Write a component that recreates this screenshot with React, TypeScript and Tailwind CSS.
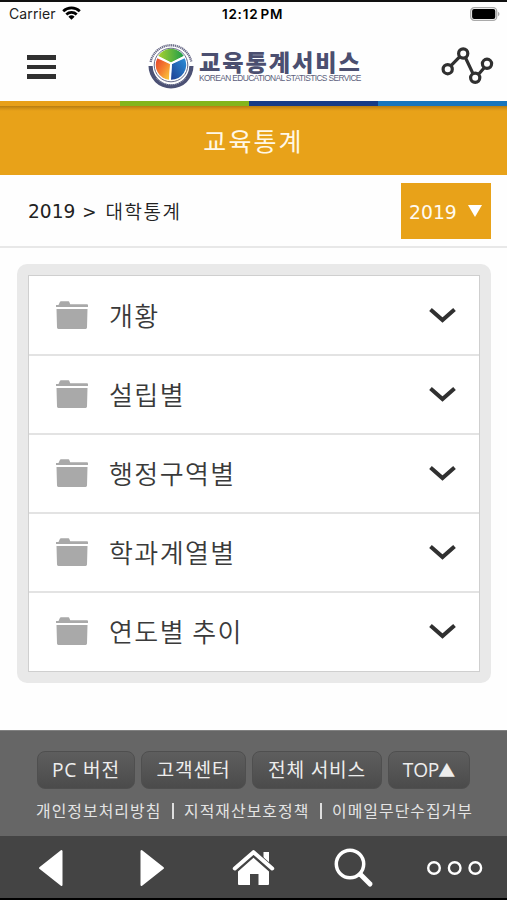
import React from 'react';
import { clsx } from 'clsx';

const StatusBar: React.FC = () => (
  <div className="h-[27px] border-t-2 border-[#111] flex items-center justify-between relative px-[9px] font-['Inter','Liberation_Sans',sans-serif] text-black">
    <div className="flex items-center gap-[6px]">
      <span className="text-[14px] leading-6 tracking-[0.1px] text-[#222] -mt-[2px]">Carrier</span>
      <svg className="w-[19px] h-[14px] -mt-[3px]" viewBox="0 0 19 14" fill="none" stroke="#000" strokeWidth="2.7">
        <path d="M1.2 5.2a12 12 0 0 1 16.6 0" />
        <path d="M4.3 8.5a7.5 7.5 0 0 1 10.4 0" />
        <path d="M9.5 13.8 6.4 10.7a4.5 4.5 0 0 1 6.2 0z" fill="#000" stroke="none" />
      </svg>
    </div>
    <span className="absolute left-[222px] top-0 text-[13.5px] leading-6 tracking-[0.75px] font-semibold whitespace-nowrap [word-spacing:-2px]">
      12:12 PM
    </span>
    <svg className="w-[30px] h-[14px] -mr-[2px] -mt-[2px]" viewBox="0 0 30 14">
      <rect x="0.7" y="0.7" width="26" height="12.6" rx="3.6" fill="#fff" stroke="#aaa" strokeWidth="1.3" />
      <rect x="2.1" y="2" width="23.2" height="10" rx="2" fill="#000" />
      <path d="M28 4.8c2 .8 2 3.6 0 4.4z" fill="#aaa" />
    </svg>
  </div>
);

const Emblem: React.FC = () => (
  <svg className="w-[46px] h-[46px]" viewBox="0 0 46 46" fill="none">
    <defs>
      <linearGradient id="green" x1="0" y1="0" x2="1" y2="0">
        <stop offset="0" stopColor="#a9d12f" />
        <stop offset="1" stopColor="#1d9c4a" />
      </linearGradient>
      <linearGradient id="red" x1="0" y1="0" x2="1" y2="1">
        <stop offset="0" stopColor="#e5412b" />
        <stop offset="0.5" stopColor="#f58030" />
        <stop offset="1" stopColor="#fbd23c" />
      </linearGradient>
      <linearGradient id="blue" x1="0" y1="1" x2="1" y2="0">
        <stop offset="0" stopColor="#1d3f94" />
        <stop offset="1" stopColor="#2c8fd8" />
      </linearGradient>
    </defs>
    <path d="M2.6 19a20.8 20.8 0 0 1 40.8 0" stroke="#6c6e8a" strokeWidth="2.3" strokeDasharray="1.3 0.6" />
    <path d="M0.5 23h4.2a18.3 18.3 0 0 0 36.6 0h4.2a22.5 22.5 0 0 1-45 0z" fill="#4c5174" />
    <path d="M8 35a20 20 0 0 0 30 0" stroke="#b9bccd" strokeWidth="0.8" strokeDasharray="1 1" />
    <circle cx="23" cy="22" r="16.8" stroke="#686c89" strokeWidth="1" />
    <path d="M23 19.5 10.2 13a15 15 0 0 1 25.6 0z" fill="url(#green)" />
    <path d="M22 21 21 36.8A15 15 0 0 1 9.3 15.2z" fill="url(#red)" />
    <path d="M24 21 36.7 15.2A15 15 0 0 1 23 36.8z" fill="url(#blue)" />
    <path d="M23 20.5 9.3 13.5M23 20.5l13.7-7M23 20.5 21.8 37" stroke="#fff" strokeWidth="1.5" />
  </svg>
);

const Header: React.FC = () => (
  <header className="h-[74px] flex items-center pl-[27px] pr-[13px]">
    <button className="flex flex-col gap-[5px] mt-[6px]" aria-label="메뉴">
      <span className="w-[29px] h-[4.5px] bg-[#303030]" />
      <span className="w-[29px] h-[4.5px] bg-[#303030]" />
      <span className="w-[29px] h-[4.5px] bg-[#303030]" />
    </button>
    <div className="flex items-center ml-[92px] mt-[4px]">
      <Emblem />
      <div className="ml-[5px] w-[164px] whitespace-nowrap text-[#4b4f70]">
        <div className="font-['Noto_Sans_CJK_KR',sans-serif] font-black text-[23.2px] leading-[24px] tracking-[1.9px]">교육통계서비스</div>
        <div className="font-['Liberation_Sans',sans-serif] text-[8.4px] leading-[10px] tracking-[-0.62px] text-[#5c5f7c]">
          KOREAN EDUCATIONAL STATISTICS SERVICE
        </div>
      </div>
    </div>
    <svg className="w-[54px] h-[38px] ml-auto mt-[3px]" viewBox="0 0 54 38" fill="none" stroke="#303030" strokeWidth="3.2">
      <path d="m11 18.7 8.6-8.8M25.6 11l7.4 15.600M38.8 27l5-5.8" />
      <circle cx="7.7" cy="22.2" r="4.6" />
      <circle cx="23.2" cy="6.5" r="4.6" />
      <circle cx="35.2" cy="30.8" r="4.6" />
      <circle cx="47" cy="16.8" r="4.6" />
    </svg>
  </header>
);

const FolderIcon: React.FC = () => (
  <svg className="w-8 h-7" viewBox="0 0 32 28" fill="#a9a9a9">
    <path d="M0 6V4h2.5L4 0.8Q4.2.3 5 .3h7.5q.7 0 .8.6l.9 2.4H31q1 0 1 1V6z" />
    <path d="M.5 8h31L31 26.6q0 1.4-1.4 1.4H2.4Q1 28 1 26.6z" />
  </svg>
);

const categories = ['개황', '설립별', '행정구역별', '학과계열별', '연도별 추이'];

const CategoryRow: React.FC<{ label: string; last: boolean }> = ({ label, last }) => (
  <li className={clsx('h-[79px] flex items-center pl-[27px] pr-[23px]', last ? 'pb-[3px]' : 'pb-px border-b-2 border-[#e3e3e3]')}>
    <FolderIcon />
    <span className="ml-[21px] font-['Noto_Sans_CJK_KR',sans-serif] font-[350] text-[26px] leading-8 tracking-[1.4px] text-[#3a3a3a] whitespace-nowrap">{label}</span>
    <svg className="w-[27px] h-[17px] ml-auto mt-px" viewBox="0 0 27 17" fill="none" stroke="#303030" strokeWidth="4">
      <path d="m1.5 2.5 12 10.6 12-10.6" />
    </svg>
  </li>
);

const footerButtons = [
  { label: 'PC 버전', width: 'w-[98px]' },
  { label: '고객센터', width: 'w-[105px]' },
  { label: '전체 서비스', width: 'w-[130px]' },
];

const buttonClass =
  'h-[38px] rounded-[8px] border border-[#4f4f4f] bg-linear-to-b from-[#5e5e5e] to-[#4b4b4b] text-[19.2px] leading-[36px] tracking-[0.8px]';

const Footer: React.FC = () => (
  <footer className="h-[106px] bg-[#666] border-t border-[#818181] font-['Open_Sans','Noto_Sans_CJK_KR',sans-serif] text-[#ededed] whitespace-nowrap">
    <div className="flex gap-[6px] pl-[37px] pt-[20px]">
      {footerButtons.map((button) => (
        <button key={button.label} className={clsx(buttonClass, button.width)}>
          {button.label}
        </button>
      ))}
      <button className={clsx(buttonClass, 'w-[82px] flex items-center justify-center')}>
        <span className="tracking-[-0.2px]">TOP</span>
        <span className="font-['Noto_Sans_CJK_KR',sans-serif] text-[17px] tracking-[0px] -ml-px">▲</span>
      </button>
    </div>
    <div className="flex justify-between items-center ml-[36px] w-[437px] mt-[10px] font-['Noto_Sans_CJK_KR',sans-serif] text-[15.9px] leading-[24px] tracking-[1.05px] text-[#e4e4e4]">
      <a>개인정보처리방침</a>
      <span className="w-[2px] h-[16px] bg-[#dedede]" />
      <a>지적재산보호정책</a>
      <span className="w-[2px] h-[16px] bg-[#dedede]" />
      <a>이메일무단수집거부</a>
    </div>
  </footer>
);

const Toolbar: React.FC = () => (
  <nav className="h-[64px] bg-[#444] border-b-2 border-black flex items-center pl-[38px] pt-[2px]">
    <svg className="w-[26px] h-[38px]" viewBox="0 0 26 38" fill="#fff" stroke="#fff" strokeWidth="2" strokeLinejoin="round">
      <path d="M2 19 23.5 2v34z" />
    </svg>
    <svg className="w-[26px] h-[38px] ml-[75px]" viewBox="0 0 26 38" fill="#fff" stroke="#fff" strokeWidth="2" strokeLinejoin="round">
      <path d="M24 19 2.5 2v34z" />
    </svg>
    <svg className="w-[43px] h-[38px] ml-[67px]" viewBox="0 0 43 38" fill="none">
      <path d="M31.5 3h5.5v13l-5.5-5z" fill="#fff" />
      <path d="M6 22.5 21.5 8.8 37 22.5V35q0 1-1 1h-9.5V25H18v11H7q-1 0-1-1z" fill="#fff" />
      <path d="M2.8 20 21.5 3.5 40.2 20" stroke="#444" strokeWidth="6" strokeLinecap="round" strokeLinejoin="round" />
      <path d="M2.8 19.500 21.500 3.200 40.200 19.500" stroke="#fff" strokeWidth="4" strokeLinecap="round" strokeLinejoin="round" />
    </svg>
    <svg className="w-[40px] h-[40px] ml-[59px]" viewBox="0 0 40 40" fill="none" stroke="#fff">
      <circle cx="16" cy="16" r="13.7" strokeWidth="3.5" />
      <path d="m26.5 26.5 9.500 9.500" strokeWidth="5" strokeLinecap="round" />
    </svg>
    <svg className="w-[58px] h-[16px] ml-[52px]" viewBox="0 0 58 16" fill="none" stroke="#fff" strokeWidth="2.4">
      <circle cx="8" cy="8" r="5.8" />
      <circle cx="28.7" cy="8" r="5.8" />
      <circle cx="49.3" cy="8" r="5.8" />
    </svg>
  </nav>
);

const App: React.FC = () => {
  return (
    <div className="w-[507px] h-[900px] bg-[#fefefe] overflow-hidden flex flex-col">
      <StatusBar />
      <Header />
      <div className="h-[5px] flex">
        <span className="w-[120px] bg-[#e8a019]" />
        <span className="w-[129px] bg-[#83b51c]" />
        <span className="w-[129px] bg-[#153b88]" />
        <span className="flex-1 bg-[#1775bd]" />
      </div>
      <div className="h-[69px] bg-[linear-gradient(#b87d12_0px,#d99616_3px,#e8a219_5px)] flex items-center justify-center">
        <h1 className="font-['Noto_Sans_CJK_KR',sans-serif] text-[25px] leading-8 tracking-[2.1px] text-[#fff8e7] pb-px">교육통계</h1>
      </div>

      <div className="h-[73px] border-b-2 border-[#e8e8e8] flex items-center justify-between pl-[28px] pr-[16px]">
        <div className="flex items-center font-['DejaVu_Sans',sans-serif] text-[18.6px] leading-6 text-[#222]">
          <span className="pt-[2px]">2019</span>
          <span className="ml-[7px] text-[17px] pt-[2px]">&gt;</span>
          <span className="ml-[9px] font-['Noto_Sans_CJK_KR',sans-serif] font-[350] text-[19px] tracking-[1.5px]">대학통계</span>
        </div>
        <button className="w-[90px] h-[56px] bg-[#e8a219] flex items-center pl-[8px] text-[#fffaf0] font-['DejaVu_Sans',sans-serif]">
          <span className="text-[18.8px] pt-[5px]">2019</span>
          <svg className="w-[14px] h-[12px] ml-[11px]" viewBox="0 0 14 12" fill="#fff">
            <path d="M0 0h14L7 12z" />
          </svg>
        </button>
      </div>

      <main className="ml-[17px] mr-[16px] mt-[16px] h-[419px] p-[11px] bg-[#e9e9e9] rounded-[10px]">
        <ul className="h-[397px] bg-white border border-[#cfcfcf] pt-px">
          {categories.map((label, index) => (
            <CategoryRow key={label} label={label} last={index === categories.length - 1} />
          ))}
        </ul>
      </main>

      <div className="mt-auto">
        <Footer />
        <Toolbar />
      </div>
    </div>
  );
};

export default App;
